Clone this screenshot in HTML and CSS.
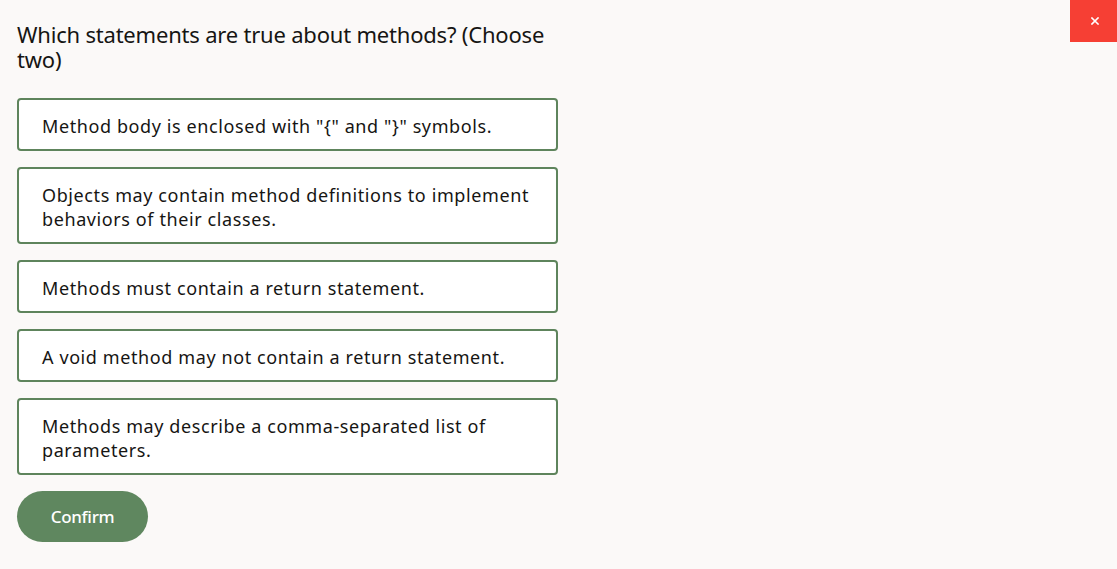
FILE: index.html
```html
<!DOCTYPE html>
<html lang="en">
<head>
<meta charset="utf-8">
<title>Quiz</title>
<link rel="stylesheet" href="styles.css">
</head>
<body>
<div class="page">
  <main class="quiz">
    <h1 class="question">Which statements are true about methods? (Choose two)</h1>
    <div class="options">
      <button class="option">Method body is enclosed with "{" and "}" symbols.</button>
      <button class="option">Objects may contain method definitions to implement behaviors of their classes.</button>
      <button class="option">Methods must contain a return statement.</button>
      <button class="option">A void method may not contain a return statement.</button>
      <button class="option">Methods may describe a comma-separated list of parameters.</button>
    </div>
    <button class="confirm">Confirm</button>
  </main>
  <button class="close" aria-label="Close">
    <svg width="8" height="8" viewBox="0 0 8 8"><path d="M1 1L7 7M7 1L1 7" stroke="#fff" stroke-width="1.6" stroke-linecap="square"/></svg>
  </button>
</div>
</body>
</html>
```
FILE: styles.css
```css
* { box-sizing: border-box; }
html, body { margin: 0; padding: 0; }
body {
  background: #fbf9f8;
  font-family: "Noto Sans", "Open Sans", sans-serif;
  color: #161513;
  width: 1117px;
  height: 569px;
  overflow: hidden;
}
.page {
  display: flex;
  justify-content: space-between;
  align-items: flex-start;
}
.quiz {
  width: 575px;
  padding: 22px 17px 0 17px;
}
.question {
  margin: 0;
  font-size: 22px;
  font-weight: 400;
  line-height: 25px;
  letter-spacing: -0.2px;
}
.options {
  margin-top: 26px;
  display: flex;
  flex-direction: column;
  gap: 16px;
}
.option {
  display: block;
  width: 100%;
  text-align: left;
  background: #ffffff;
  border: 2px solid #5e845c;
  border-radius: 4px;
  padding: 14px 20px 11px 23px;
  font-family: inherit;
  font-size: 18px;
  line-height: 24px;
  letter-spacing: 0.6px;
  color: #161513;
}
.confirm {
  margin-top: 16px;
  width: 131px;
  height: 51px;
  border: none;
  border-radius: 26px;
  background: #5f875f;
  color: #ffffff;
  font-family: inherit;
  font-size: 17px;
  font-weight: 500;
  letter-spacing: -0.3px;
}
.close {
  width: 47px;
  height: 42px;
  border: none;
  background: #f63f34;
  display: flex;
  align-items: center;
  justify-content: center;
  padding: 0 0 1px 3px;
}
```
